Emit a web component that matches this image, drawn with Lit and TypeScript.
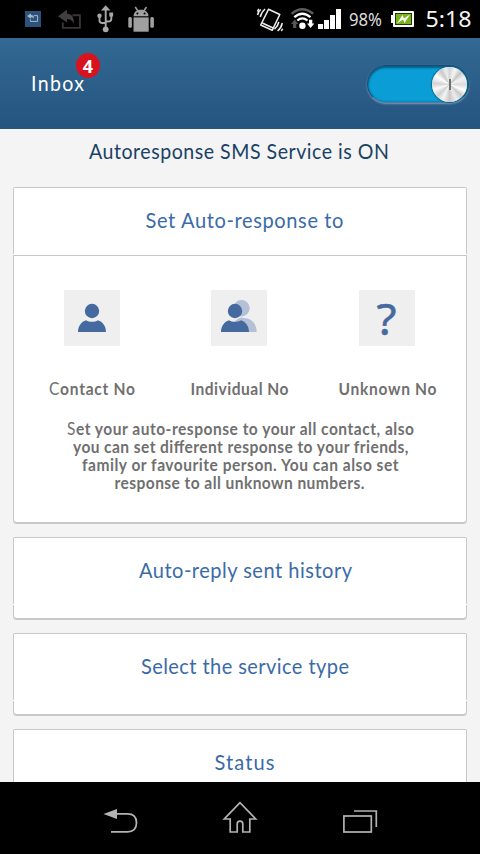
import { LitElement, html, svg, css } from "lit";
import { customElement, property } from "lit/decorators.js";

type Line = { text: string; x: number; w: number; y: number; thin?: number };

/** Horizontal condensation of the glyphs. */
const CONDENSE = 0.955;

/** One or more lines of text, each spaced out to a measured width. */
@customElement("fitted-text")
class FittedText extends LitElement {
  @property({ attribute: false }) lines: Line[] = [];
  @property({ type: Number }) width = 0;
  @property({ type: Number }) height = 0;
  static styles = css`
    :host { display: block; }
    svg { display: block; overflow: visible; }
    text { fill: currentColor; }
    .thin { font-weight: 400; }
  `;
  render() {
    return html`<svg width=${this.width} height=${this.height}>
      ${this.lines.map((l) => {
        const n = l.thin ?? 0;
        return svg`<text transform="translate(${l.x} ${l.y}) scale(${CONDENSE} 1)" textLength=${l.w / CONDENSE} lengthAdjust="spacing"><tspan class="thin">${l.text.slice(0, n)}</tspan>${l.text.slice(n)}</text>`;
      })}
    </svg>`;
  }
}

@customElement("status-bar")
class StatusBar extends LitElement {
  static styles = css`
    :host { display: block; height: 38px; background: #000; }
    svg { display: block; }
    .pct { font: 17.500px "Noto Sans", sans-serif; fill: #dcdcdc; }
    .clock { font: 22.500px "Noto Sans", sans-serif; fill: #f4f4f4; }
  `;
  render() {
    return html`<svg width="480" height="38" viewBox="0 0 480 38">
      <rect x="25" y="11" width="16" height="16" fill="#2a527a" />
      <path d="M27 16l4-2.5v1.6c2 0 3 1 3 3.4-1-1-1.6-1.3-3-1.3v1.5z" fill="#a9b9c8" />
      <path d="M34 15.6h3.6v5.8h-7.2v-2" fill="none" stroke="#a9b9c8" />
      <path d="M58 16.2l9-6.4v4c5 0 7 3.5 7 9.6-2.2-3.2-4-4.4-7-4.4v3.6z" fill="#443e3e" />
      <path d="M72.5 15.3h7.4v12.6H62.8v-5.5" fill="none" stroke="#3a3535" stroke-width="1.9" />
      <g fill="none" stroke="#a8a8a8" stroke-width="1.900">
        <path d="M105.700 9v19M99.500 16v4.500q0 2.500 3 2.500h3M111.300 15v4q0 2.500-3 2.500h-2.500" />
      </g>
      <path d="M105.700 5.300l4.800 5.200h-9.600z" fill="#a8a8a8" />
      <circle cx="105.700" cy="29.300" r="2.900" fill="#a8a8a8" /><circle cx="99.500" cy="15.800" r="2.200" fill="#a8a8a8" />
      <rect x="109.300" y="12.500" width="3.800" height="4" fill="#a8a8a8" />
      <g fill="#a0a0a0">
        <path d="M133.500 16.200c.3-4 2.600-6.500 7.400-6.500s7.200 2.500 7.600 6.500z" />
        <path d="M135.200 7l2.800 4M146.500 7l-2.800 4" stroke="#a0a0a0" stroke-width="1.500" />
        <rect x="133.500" y="17.400" width="15.200" height="14.300" />
        <rect x="128.300" y="17" width="3.600" height="10.700" rx="1.500" /><rect x="150.300" y="17" width="3.600" height="10.700" rx="1.500" />
      </g>
      <circle cx="137.400" cy="13.500" r="1" fill="#000" /><circle cx="144.600" cy="13.500" r="1" fill="#000" />

      <g fill="none" stroke="#eee" stroke-width="1.500">
        <path d="M268.500 9.300l11.300 5.200-7.600 15.800-11.500-5.300z" stroke-linejoin="round" />
        <path d="M262.300 23l10.800 5" />
        <path d="M257.500 15q.8-3.500 3.300-5.500M260.300 17q.8-4.500 4.700-8M282.300 23q-.8 4.500-4.700 8M278.800 22q-.8 4.200-4.300 7.300M257.500 11.500q.3-1.500 1.500-2.500M281.200 31q1-1 1.300-2.300" />
      </g>
      <g fill="none">
        <path d="M291.700 13.800q10.600-9 21.400 0" stroke="#5c5c5c" stroke-width="2.500" />
        <path d="M294.300 17.200q8-7 16.200 0" stroke="#fff" stroke-width="2.300" />
        <path d="M297.300 20.500q5-4.300 10.200 0" stroke="#fff" stroke-width="2.200" />
      </g>
      <circle cx="302.400" cy="25.700" r="3.200" fill="#fff" />
      <path d="M294.700 19.500l3.600 4.500h-2v4h-3.300v-4h-2z" fill="#555" />
      <path d="M310.600 28l-3.600-4.500h2v-3.700h3.300v3.700h2z" fill="#fff" />
      <path d="M318 24h5v5h-5zM324 20h5v9h-5zM330 15h5v14h-5zM336 9h5v20h-5z" fill="#fff" />
      <text class="pct" x="349" y="26" textLength="33" lengthAdjust="spacingAndGlyphs">98%</text>
      <path d="M391 15h2v8h-2z" fill="#fff" />
      <rect x="393" y="11" width="21" height="16" rx="1" fill="#fff" />
      <rect x="395" y="13" width="17" height="12" fill="#233800" />
      <rect x="396" y="14" width="15" height="10" fill="#79b41c" />
      <path d="M397 23.500l5.500-8.500 1.500 3.500 6-4-5.500 8.500-1.500-3.500z" fill="#fff" />
      <text class="clock" x="425.500" y="27.300" textLength="46" lengthAdjust="spacingAndGlyphs">5:18</text>
    </svg>`;
  }
}

@customElement("power-switch")
class PowerSwitch extends LitElement {
  static styles = css`
    :host {
      display: flex; justify-content: flex-end; align-items: center; box-sizing: border-box;
      width: 102px; height: 38px; padding: 0 1px; border-radius: 19px;
      background: #0a9dd6; border: 1px solid #194d70; border-bottom-color: #537d9d;
      box-shadow: inset 0 2px 2px #075e87, inset 0 0 2px #06597f, 0 1px 2px #7c9db7;
    }
    .knob {
      display: grid; place-items: center; width: 35px; height: 35px; border-radius: 50%;
      background: conic-gradient(#d5d5d5, #f6f6f6 6%, #c6c6c6 12%, #f3f3f3 18%, #ddd 25%, #fff 31%, #c9c9c9 37%, #ededed 43%, #c8c8c8 50%, #f5f5f5 57%, #d0d0d0 63%, #fafafa 70%, #d2d2d2 76%, #fff 84%, #c9c9c9 91%, #eee 96%, #d5d5d5);
      box-shadow: 0 0 1px 1px #08638d, inset 0 0 1px #fff;
    }
    .mark { width: 2px; height: 11px; background: #707070; }
  `;
  render() {
    return html`<div class="knob"><div class="mark"></div></div>`;
  }
}

const BODY = "M0 12C0 6 3.500 1.500 8 0.200C11.500 2.200 16.500 2.200 20 0.200C24.500 1.500 28 6 28 12Z";

@customElement("app-root")
class AppRoot extends LitElement {
  static styles = css`
    :host {
      display: flex; flex-direction: column; width: 480px; height: 854px; overflow: hidden;
      background: #f4f4f4; font-family: Lato, "Noto Sans", sans-serif;
    }
    header {
      flex: none; display: flex; justify-content: space-between; box-sizing: border-box; height: 91px;
      padding: 27px 11px 0 31px; background: linear-gradient(#336994, #24547f);
    }
    .inbox { position: relative; height: 38px; color: #fff; font-size: 20.500px; }
    .badge {
      position: absolute; left: 45px; top: -12px; width: 24px; height: 25px; border-radius: 50%;
      background: #d7131d; font: bold 18px/26px "Noto Sans", sans-serif; text-align: center;
    }
    main { flex: 1; min-height: 0; overflow: hidden; display: flex; flex-direction: column; }
    .service { flex: none; color: #194266; font-size: 20.500px; }
    .cards { display: flex; flex-direction: column; gap: 13px; padding: 0 13px; }
    .card {
      flex: none; position: relative; box-sizing: border-box; width: 454px; height: 83px;
      background: #fff; border: 1px solid #c8c8c8; border-bottom-width: 2px; border-radius: 2px 2px 4px 4px;
    }
    .card.open { height: 337px; }
    .card::after {
      content: ""; position: absolute; left: -1px; right: -1px; top: 66px; height: 1px; background: #fff;
    }
    .title { height: 67px; color: #3a6ba8; font-size: 21px; }
    .open .title { border-bottom: 1px solid #c8c8c8; }
    .tiles { display: grid; grid-template-columns: 147px 148px 56px; padding: 34px 0 0 50px; }
    .tile { width: 56px; height: 56px; background: #efefef; border-radius: 1px; }
    .tile svg { display: block; overflow: visible; }
    .q { font: 44px "Noto Sans", sans-serif; fill: #456a9f; stroke: #456a9f; stroke-width: .5; }
    .labels, .about { color: #707070; font-weight: 700; font-size: 16.300px; }
    nav { flex: none; height: 72px; background: #000; }
    nav svg { display: block; }
  `;

  private text(lines: Line[], width: number, height: number) {
    return html`<fitted-text .lines=${lines} .width=${width} .height=${height}></fitted-text>`;
  }

  private card(text: string, x: number, w: number) {
    return html`<section class="card"><div class="title">${this.text([{ text, x, w, y: 40 }], 452, 67)}</div></section>`;
  }

  render() {
    return html`
      <status-bar></status-bar>
      <header>
        <div class="inbox">
          ${this.text([{ text: "Inbox", x: 0, w: 53, y: 26 }], 53, 38)}
          <div class="badge">4</div>
        </div>
        <power-switch></power-switch>
      </header>
      <main>
        <div class="service">${this.text([{ text: "Autoresponse SMS Service is ON", x: 89, w: 300, y: 30 }], 480, 58)}</div>
        <div class="cards">
          <section class="card open">
            <div class="title">${this.text([{ text: "Set Auto-response to", x: 131.5, w: 198, y: 40 }], 452, 67)}</div>
            <div class="tiles">
              <div class="tile"><svg width="56" height="56">
                <g fill="#456a9f"><circle cx="28" cy="21" r="7.200" /><path transform="translate(14 30)" d=${BODY} /></g>
              </svg></div>
              <div class="tile"><svg width="56" height="56">
                <g fill="#b4c0d5"><circle cx="30.500" cy="18.300" r="8.200" /><path d="M18 42C20 34 25 29 30 27.500L37 28.700C42 30 45.700 35 45.700 42Z" /></g>
                <g fill="#456a9f"><circle cx="24" cy="21" r="7.200" /><path transform="translate(10 30)" d=${BODY} /></g>
              </svg></div>
              <div class="tile"><svg width="56" height="56"><text class="q" x="17.500" y="44.500" textLength="20" lengthAdjust="spacingAndGlyphs">?</text></svg></div>
            </div>
            <div class="labels">${this.text([
              { text: "Contact No", x: 35, w: 86, y: 48.5, thin: 1 },
              { text: "Individual No", x: 176.5, w: 98, y: 48.5 },
              { text: "Unknown No", x: 324.5, w: 98, y: 48.5 },
            ], 452, 60)}</div>
            <div class="about">${this.text([
              { text: "Set your auto-response to your all contact, also", x: 53, w: 347, y: 28.5, thin: 1 },
              { text: "you can set different response to your friends,", x: 59, w: 335.5, y: 46.5 },
              { text: "family or favourite person. You can also set", x: 68, w: 316.5, y: 64.5 },
              { text: "response to all unknown numbers.", x: 100.5, w: 250, y: 82.5 },
            ], 452, 100)}</div>
          </section>
          ${this.card("Auto-reply sent history", 125, 213)}
          ${this.card("Select the service type", 127, 208)}
          ${this.card("Status", 200.5, 60)}
        </div>
      </main>
      <nav>
        <svg width="480" height="72" viewBox="0 0 480 72" fill="none" stroke="#b3b3b3" stroke-width="1.700">
          <path d="M116 31.800h11.500q9 0 9 9t-9 9H111" />
          <path d="M103.500 32l13.500-5v10z" fill="#b3b3b3" stroke="none" />
          <path d="M240 20.700L224.300 37h5.900v13h7v-8q0-2.800 2.800-2.800t2.800 2.800v8h7V37h5.900z" />
          <rect x="343.900" y="34" width="27.400" height="16" />
          <path d="M354 29h22.300v16" />
        </svg>
      </nav>`;
  }
}
